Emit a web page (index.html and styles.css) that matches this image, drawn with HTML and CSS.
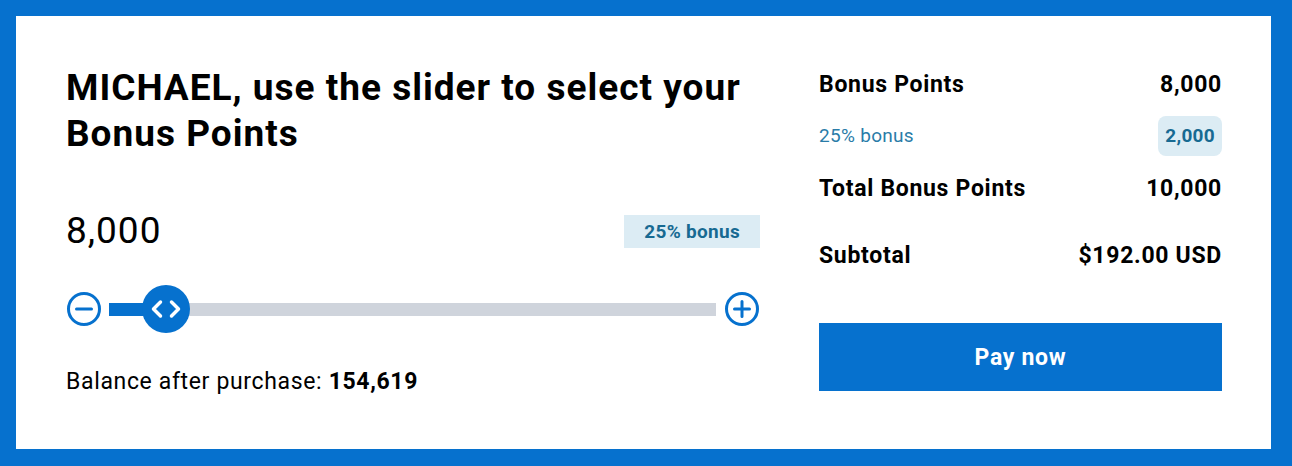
FILE: index.html
```html
<!DOCTYPE html>
<html lang="en">
<head>
<meta charset="utf-8">
<title>Bonus Points</title>
<link rel="stylesheet" href="styles.css">
</head>
<body>
<main class="card">
  <section class="picker">
    <h1 class="picker__title">MICHAEL, use the slider to select your Bonus Points</h1>
    <div class="picker__amount">
      <span class="picker__value">8,000</span>
      <span class="tag">25% bonus</span>
    </div>
    <div class="slider">
      <button class="slider__step" aria-label="Decrease">
        <svg viewBox="0 0 36 36" width="36" height="36"><circle cx="18" cy="18" r="15.5" fill="none" stroke="currentColor" stroke-width="3"/><path d="M10.5 18h15" stroke="currentColor" stroke-width="3" stroke-linecap="round"/></svg>
      </button>
      <div class="slider__track">
        <div class="slider__fill" style="width: 9.4%"></div>
        <div class="slider__thumb" style="left: 9.4%">
          <svg viewBox="0 0 48 48" width="48" height="48"><path d="M18.5 17L11.5 24l7 7M29.5 17l7 7-7 7" fill="none" stroke="#fff" stroke-width="3.5" stroke-linecap="round" stroke-linejoin="round"/></svg>
        </div>
      </div>
      <button class="slider__step" aria-label="Increase">
        <svg viewBox="0 0 36 36" width="36" height="36"><circle cx="18" cy="18" r="15.5" fill="none" stroke="currentColor" stroke-width="3"/><path d="M10.5 18h15M18 10.5v15" stroke="currentColor" stroke-width="3" stroke-linecap="round"/></svg>
      </button>
    </div>
    <p class="picker__balance">Balance after purchase: <strong>154,619</strong></p>
  </section>

  <aside class="summary">
    <div class="summary__row summary__row--main summary__row--first">
      <span>Bonus Points</span><span>8,000</span>
    </div>
    <div class="summary__row summary__row--bonus">
      <span>25% bonus</span><span class="pill">2,000</span>
    </div>
    <div class="summary__row summary__row--main">
      <span>Total Bonus Points</span><span>10,000</span>
    </div>
    <div class="summary__row summary__row--main summary__row--subtotal">
      <span>Subtotal</span><span>$192.00 USD</span>
    </div>
    <button class="pay">Pay now</button>
  </aside>
</main>
</body>
</html>
```

FILE: styles.css
```css
* {
  box-sizing: border-box;
}

html,
body {
  margin: 0;
  height: 100%;
}

body {
  background: #0671ce;
  padding: 16px 21px 17px 16px;
  font-family: Roboto, "Liberation Sans", Arial, sans-serif;
  color: #000;
}

.card {
  background: #fff;
  height: 100%;
  display: flex;
  gap: 59px;
  padding: 49px 49px 0 50px;
}

/* left column: heading, amount and slider */
.picker {
  width: 694px;
  flex: none;
}

.picker__title {
  margin: 0;
  font-size: 37px;
  line-height: 46px;
  letter-spacing: 1px;
  font-weight: 700;
}

.picker__amount {
  margin-top: 56px;
  display: flex;
  justify-content: space-between;
  align-items: flex-start;
}

.picker__value {
  font-size: 37px;
  line-height: 36px;
  letter-spacing: 1px;
  font-weight: 400;
}

.tag {
  margin-top: 2px;
  background: #dcecf4;
  color: #176a92;
  font-size: 19px;
  font-weight: 700;
  letter-spacing: 0.3px;
  line-height: 33px;
  padding: 0 20px;
}

.slider {
  margin-top: 36px;
  display: flex;
  align-items: center;
  height: 48px;
}

.slider__step {
  flex: none;
  background: none;
  border: 0;
  padding: 0;
  width: 36px;
  height: 36px;
  color: #0671ce;
  display: flex;
}

.slider__track {
  position: relative;
  flex: 1;
  height: 13px;
  margin: 0 8px 0 7px;
  background: #cfd4dc;
}

.slider__fill {
  height: 100%;
  background: #0671ce;
}

.slider__thumb {
  position: absolute;
  top: 50%;
  width: 48px;
  height: 48px;
  margin: -24px 0 0 -24px;
  border-radius: 50%;
  background: #0671ce;
  display: flex;
}

.picker__balance {
  margin: 35px 0 0;
  font-size: 23px;
  line-height: 28px;
  letter-spacing: 0.65px;
}

.picker__balance strong {
  font-weight: 700;
}

/* right column: order summary */
.summary {
  width: 403px;
  flex: none;
  display: flex;
  flex-direction: column;
}

.summary__row {
  display: flex;
  justify-content: space-between;
  align-items: center;
}

.summary__row--first {
  margin-top: 2px;
}

.summary__row--main {
  font-size: 23px;
  font-weight: 700;
  line-height: 36px;
  letter-spacing: 0.7px;
}

.summary__row--bonus {
  margin: 13px 0 15px;
  color: #2a7ca8;
  font-size: 19px;
  letter-spacing: 0.3px;
  line-height: 40px;
}

.pill {
  background: #dcecf4;
  color: #176a92;
  font-weight: 700;
  border-radius: 8px;
  padding: 0 7px;
}

.summary__row--subtotal {
  margin-top: 31px;
}

.pay {
  margin-top: 49px;
  height: 68px;
  border: 0;
  background: #0671ce;
  color: #fff;
  font-family: inherit;
  font-size: 23px;
  font-weight: 700;
  letter-spacing: 0.7px;
}
```
